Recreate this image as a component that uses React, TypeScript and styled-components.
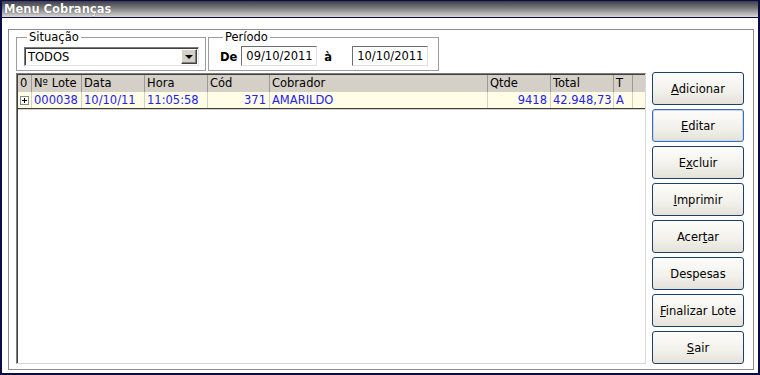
import React from 'react';
import styled, { createGlobalStyle } from 'styled-components';

const GlobalStyle = createGlobalStyle`
    * {
        box-sizing: border-box;
    }
    body {
        margin: 0;
        background: #ffffff;
        font-family: "DejaVu Sans", Verdana, sans-serif;
        font-size: 11.5px;
    }
`;

const Window = styled.div`
    width: 760px;
    height: 375px;
    display: flex;
    flex-direction: column;
    border: 2px solid #0b0b45;
    border-top-width: 1px;
    background: #ffffff;
`;

const TitleBar = styled.div`
    height: 18px;
    display: flex;
    align-items: center;
    padding-left: 2px;
    background: linear-gradient(#3c3c48, #7c7c80 45%, #d8d8d8);
    border-bottom: 1px solid #0b0b45;
    color: #ffffff;
    font-weight: bold;
    text-shadow: 0 0 1px #303030;
`;

const Body = styled.div`
    flex: 1;
    padding: 11px 4px 3px 6px;
    display: flex;
`;

const Panel = styled.div`
    flex: 1;
    border: 1px solid #8c8c8c;
    padding: 1px 6px 5px 7px;
    display: flex;
    flex-direction: column;
`;

const FilterRow = styled.div`
    display: flex;
    gap: 2px;
    height: 40px;
    margin-bottom: 1px;
`;

const Group = styled.fieldset<{ $width: number; $padLeft?: number }>`
    width: ${(p) => p.$width}px;
    margin: 0;
    padding: 0 6px 0 ${(p) => p.$padLeft ?? 7}px;
    border: 1px solid #9c9c9c;
    display: flex;
    align-items: center;
    gap: 4px;
    min-width: 0;
`;

const Legend = styled.legend`
    padding: 0 2px;
    margin-left: 3px;
    line-height: 13px;
    color: #000;
`;

const Combo = styled.div`
    width: 176px;
    height: 19px;
    margin-top: -1px;
    display: flex;
    align-items: center;
    justify-content: space-between;
    background: #fff;
    border: 1px solid;
    border-color: #7a7a7a #e4e4e4 #e4e4e4 #7a7a7a;
    box-shadow: inset 1px 1px 0 #404040;
    padding: 0 1px 0 3px;
`;

const DropButton = styled.div`
    width: 16px;
    height: 15px;
    background: #d4d0c8;
    border: 1px solid;
    border-color: #ffffff #404040 #404040 #ffffff;
    box-shadow: inset -1px -1px 0 #808080;
    display: flex;
    align-items: center;
    justify-content: center;
`;

const Arrow = styled.div`
    width: 0;
    height: 0;
    border-left: 4px solid transparent;
    border-right: 4px solid transparent;
    border-top: 4px solid #000;
`;

const BoldLabel = styled.span<{ $left?: number; $right?: number }>`
    font-weight: bold;
    margin-left: ${(p) => p.$left ?? 0}px;
    margin-right: ${(p) => p.$right ?? 0}px;
`;

const DateInput = styled.div`
    width: 76px;
    height: 20px;
    margin-top: -2px;
    border: 1px solid;
    border-color: #6e6e6e #e0e0e0 #e0e0e0 #6e6e6e;
    display: flex;
    align-items: center;
    padding-left: 4px;
    background: #fff;
`;

const MainRow = styled.div`
    flex: 1;
    display: flex;
    gap: 6px;
`;

const GridBox = styled.div`
    width: 630px;
    margin-top: 1px;
    border: 1px solid;
    border-color: #7c7c7c #d8d8d8 #d8d8d8 #7c7c7c;
    box-shadow: inset 1px 1px 0 #404040;
    padding: 1px 0 0 1px;
    display: flex;
    flex-direction: column;
`;

const columns = '14px 50px 63px 63px 62px 218px 63px 63px 19px 1fr';

const HeaderRow = styled.div`
    display: grid;
    grid-template-columns: ${columns};
    height: 17px;
    background: #d4d0c8;
`;

const HeaderCell = styled.div`
    border-right: 1px solid #9a9a9a;
    padding-left: 2px;
    line-height: 16px;
    color: #000;
    white-space: nowrap;
    overflow: hidden;
    &:last-child {
        border-right: none;
    }
`;

const DataRow = styled.div`
    display: grid;
    grid-template-columns: ${columns};
    height: 17px;
    background: #fffde6;
    border-bottom: 1px solid #404040;
    box-shadow: 0 1px 0 #d4d0c8;
`;

const DataCell = styled.div<{ $right?: boolean }>`
    border-right: 1px solid #d4d0c8;
    padding: 0 3px 0 2px;
    line-height: 16px;
    color: #2222ee;
    text-align: ${(p) => (p.$right ? 'right' : 'left')};
    white-space: nowrap;
    overflow: hidden;
    &:last-child {
        border-right: none;
    }
`;

const ExpandCell = styled.div`
    display: flex;
    align-items: center;
    justify-content: center;
    border-right: 1px solid #d4d0c8;
`;

const Buttons = styled.div`
    width: 92px;
    display: flex;
    flex-direction: column;
    gap: 4px;
`;

const Button = styled.button<{ $focused?: boolean }>`
    height: 33px;
    width: 92px;
    padding: 0;
    font-family: inherit;
    font-size: 11.5px;
    color: #000;
    border-radius: 3px;
    border: 1px solid ${(p) => (p.$focused ? '#3f6bb8' : '#1d3f6b')};
    background: linear-gradient(#fdfdfb, #f1f0ea 60%, #e4e2d8);
    box-shadow: ${(p) => (p.$focused ? 'inset 0 0 0 1px #c4d6f2' : 'none')};
    white-space: nowrap;
`;

const PlusBox = () => (
    <svg width="9" height="9" viewBox="0 0 9 9">
        <rect x="0.5" y="0.5" width="8" height="8" fill="#fff" stroke="#8a8a8a" />
        <path d="M2 4.5h5M4.5 2v5" stroke="#000" strokeWidth="1" />
    </svg>
);

const headers = ['0', 'Nº Lote', 'Data', 'Hora', 'Cód', 'Cobrador', 'Qtde', 'Total', 'T', ''];

const App: React.FC = () => {
    return (
        <>
            <GlobalStyle />
            <Window>
                <TitleBar>Menu Cobranças</TitleBar>
                <Body>
                    <Panel>
                        <FilterRow>
                            <Group $width={190}>
                                <Legend>Situação</Legend>
                                <Combo>
                                    <span>TODOS</span>
                                    <DropButton>
                                        <Arrow />
                                    </DropButton>
                                </Combo>
                            </Group>
                            <Group $width={231} $padLeft={11}>
                                <Legend>Período</Legend>
                                <BoldLabel>De</BoldLabel>
                                <DateInput>09/10/2011</DateInput>
                                <BoldLabel $left={3} $right={16}>à</BoldLabel>
                                <DateInput>10/10/2011</DateInput>
                            </Group>
                        </FilterRow>
                        <MainRow>
                            <GridBox>
                                <HeaderRow>
                                    {headers.map((h, i) => (
                                        <HeaderCell key={i}>{h}</HeaderCell>
                                    ))}
                                </HeaderRow>
                                <DataRow>
                                    <ExpandCell>
                                        <PlusBox />
                                    </ExpandCell>
                                    <DataCell>000038</DataCell>
                                    <DataCell>10/10/11</DataCell>
                                    <DataCell>11:05:58</DataCell>
                                    <DataCell $right>371</DataCell>
                                    <DataCell>AMARILDO</DataCell>
                                    <DataCell $right>9418</DataCell>
                                    <DataCell $right>42.948,73</DataCell>
                                    <DataCell>A</DataCell>
                                    <DataCell />
                                </DataRow>
                            </GridBox>
                            <Buttons>
                                <Button><u>A</u>dicionar</Button>
                                <Button $focused><u>E</u>ditar</Button>
                                <Button>E<u>x</u>cluir</Button>
                                <Button><u>I</u>mprimir</Button>
                                <Button>Acer<u>t</u>ar</Button>
                                <Button>Despesas</Button>
                                <Button><u>F</u>inalizar Lote</Button>
                                <Button><u>S</u>air</Button>
                            </Buttons>
                        </MainRow>
                    </Panel>
                </Body>
            </Window>
        </>
    );
};

export default App;
